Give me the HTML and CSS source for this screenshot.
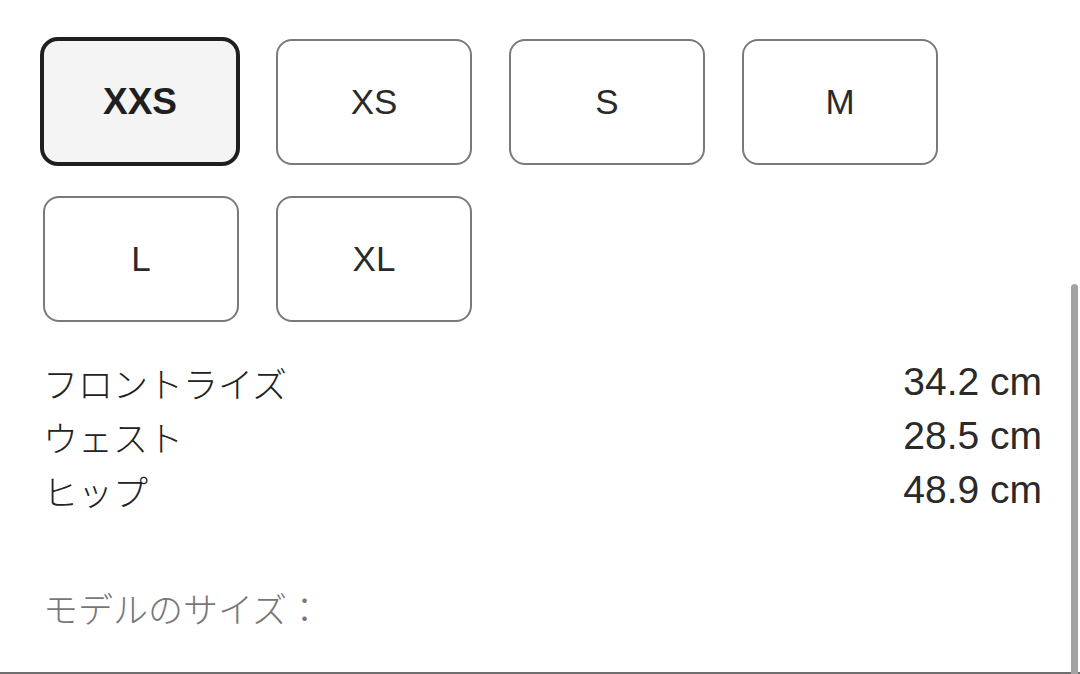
FILE: index.html
```html
<!DOCTYPE html>
<html lang="ja">
<head>
<meta charset="utf-8">
<link rel="stylesheet" href="styles.css">
</head>
<body>
<div class="page">
  <div class="sizes">
    <button class="size selected">XXS</button>
    <button class="size">XS</button>
    <button class="size">S</button>
    <button class="size">M</button>
    <button class="size">L</button>
    <button class="size">XL</button>
  </div>
  <div class="measures">
    <div class="row"><span class="label">フロントライズ</span><span class="value">34.2 cm</span></div>
    <div class="row"><span class="label">ウェスト</span><span class="value">28.5 cm</span></div>
    <div class="row"><span class="label">ヒップ</span><span class="value">48.9 cm</span></div>
  </div>
  <div class="model">モデルのサイズ：</div>
</div>
<div class="scrollbar"></div>
</body>
</html>
```
FILE: styles.css
```css
html, body {
  margin: 0;
  padding: 0;
  background: #ffffff;
}
body {
  font-family: "Liberation Sans", "Noto Sans CJK JP", sans-serif;
  color: #222222;
  overflow: hidden;
}
.page {
  box-sizing: border-box;
  height: 674px;
  padding: 39px 38px 0 43px;
  border-bottom: 2px solid #6e6e6e;
  display: flex;
  flex-direction: column;
}
.sizes {
  display: grid;
  grid-template-columns: repeat(4, 196px);
  grid-auto-rows: 126px;
  column-gap: 37px;
  row-gap: 31px;
}
.size {
  box-sizing: border-box;
  margin: 0;
  background: #ffffff;
  border: 2px solid #7a7a7a;
  border-radius: 16px;
  font-family: "Liberation Sans", sans-serif;
  font-size: 35px;
  color: #2a2a2a;
  padding: 0;
}
.size.selected {
  margin: -2px -1px -1px -3px;
  border: 4px solid #1f1f1f;
  border-radius: 18px;
  background: #f4f4f4;
  font-weight: bold;
  font-size: 37px;
  color: #1f1f1f;
}
.measures {
  margin-top: 33px;
  display: flex;
  flex-direction: column;
}
.row {
  display: flex;
  justify-content: space-between;
  align-items: center;
  height: 54px;
}
.label {
  font-family: "Noto Sans CJK JP", sans-serif;
  font-size: 35px;
  font-weight: 300;
  color: #222222;
}
.value {
  font-family: "Liberation Sans", sans-serif;
  font-size: 39px;
  color: #2a2a2a;
}
.model {
  margin-top: 63px;
  height: 54px;
  display: flex;
  align-items: center;
  font-family: "Noto Sans CJK JP", sans-serif;
  font-size: 35px;
  font-weight: 300;
  color: #777777;
}
.scrollbar {
  position: absolute;
  left: 1071px;
  top: 284px;
  width: 7px;
  height: 400px;
  background: #a3a3a3;
  border-radius: 4px 4px 0 0;
}
```
